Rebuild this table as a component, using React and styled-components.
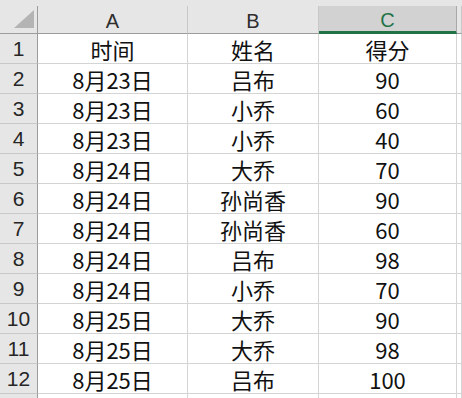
import React from "react";
import styled, { createGlobalStyle } from "styled-components";

const GlobalStyle = createGlobalStyle`
  html, body {
    margin: 0;
    padding: 0;
    background: #ffffff;
  }
  body {
    font-family: "Noto Sans CJK SC", "Noto Sans", sans-serif;
    overflow: hidden;
  }
`;

const Sheet = styled.div`
  display: grid;
  grid-template-columns: 38px 150px 131px 138px 5px;
  grid-auto-rows: 30px;
  grid-template-rows: 34px;
  width: 462px;
  height: 398px;
  overflow: hidden;
  background: #e6e6e6;
`;

const HeaderCell = styled.div`
  box-sizing: border-box;
  display: flex;
  align-items: center;
  justify-content: center;
  margin-top: 6px;
  padding-top: 3px;
  background: ${(p) => (p.$selected ? "#d2d2d2" : "#e6e6e6")};
  border-right: 1px solid ${(p) => (p.$selected ? "#a8a8a8" : "#c8c8c8")};
  border-bottom: ${(p) => (p.$selected ? "3px solid #217346" : "1px solid #9c9c9c")};
  color: ${(p) => (p.$selected ? "#217346" : "#2e2e2e")};
  font-family: "Liberation Sans", "Noto Sans", sans-serif;
  font-size: 20px;
  position: relative;
`;

const Corner = styled(HeaderCell)`
  border-right: 1px solid #9c9c9c;
`;

const Triangle = styled.div`
  position: absolute;
  right: 3px;
  bottom: 5px;
  width: 0;
  height: 0;
  border-left: 20px solid transparent;
  border-bottom: 18px solid #b4b4b4;
`;

const RowHeader = styled.div`
  box-sizing: border-box;
  display: flex;
  align-items: center;
  justify-content: center;
  background: #e6e6e6;
  border-right: 1px solid #9c9c9c;
  border-bottom: 1px solid #c8c8c8;
  color: #262626;
  font-family: "Liberation Sans", "Noto Sans", sans-serif;
  font-size: 21px;
  padding-top: 1px;
`;

const Cell = styled.div`
  box-sizing: border-box;
  display: flex;
  align-items: center;
  justify-content: center;
  background: #ffffff;
  border-right: 1px solid #d4d4d4;
  border-bottom: 1px solid #d4d4d4;
  color: #111111;
  font-size: 22px;
  white-space: nowrap;
`;

const columns = ["A", "B", "C"];

const rows = [
  ["时间", "姓名", "得分"],
  ["8月23日", "吕布", "90"],
  ["8月23日", "小乔", "60"],
  ["8月23日", "小乔", "40"],
  ["8月24日", "大乔", "70"],
  ["8月24日", "孙尚香", "90"],
  ["8月24日", "孙尚香", "60"],
  ["8月24日", "吕布", "98"],
  ["8月24日", "小乔", "70"],
  ["8月25日", "大乔", "90"],
  ["8月25日", "大乔", "98"],
  ["8月25日", "吕布", "100"],
];

const App = () => {
  return (
    <>
      <GlobalStyle />
      <Sheet>
        <Corner>
          <Triangle />
        </Corner>
        {columns.map((c) => (
          <HeaderCell key={c} $selected={c === "C"}>
            {c}
          </HeaderCell>
        ))}
        <HeaderCell />
        {rows.map((r, i) => (
          <React.Fragment key={i}>
            <RowHeader>{i + 1}</RowHeader>
            {r.map((v, j) => (
              <Cell key={j}>{v}</Cell>
            ))}
            <Cell />
          </React.Fragment>
        ))}
        {/* next row, only its top edge shows */}
        <RowHeader />
        <Cell />
        <Cell />
        <Cell />
        <Cell />
      </Sheet>
    </>
  );
};

export default App;
